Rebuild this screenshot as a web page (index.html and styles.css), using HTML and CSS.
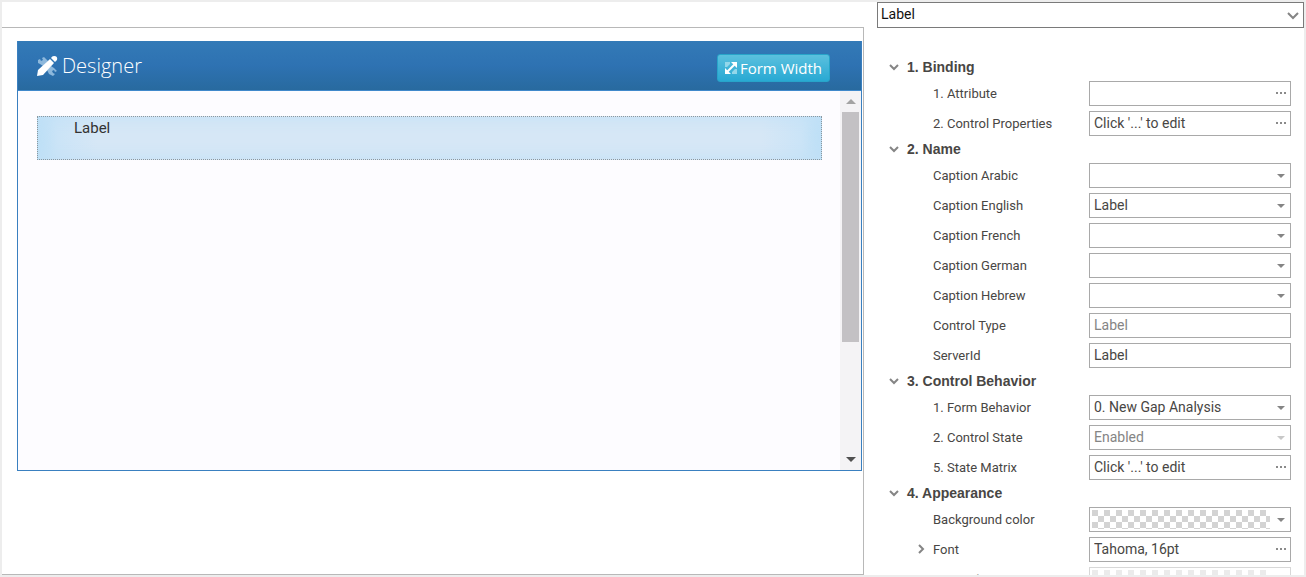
FILE: index.html
```
<!DOCTYPE html>
<html lang="en">
<head>
    <meta charset="UTF-8">
    <meta name="viewport" content="width=device-width, initial-scale=1.0">
    <title>Form Designer</title>
    <link rel="stylesheet" href="styles.css">
</head>
<body>
    <main class="workspace">
        <section class="canvas">
            <div class="designer">
                <header class="designer-header">
                    <svg class="designer-icon" viewBox="0 0 22 22" aria-hidden="true">
                        <path d="M2 5l2-1 1 2 2-1-1-2 2-1 4 4-5 5-3-2-2-1zM11 15l4-4 3 2 3 3-2 1-1-2-2 1 1 2 2 1-2 2-4-2z" fill="#8db8dc"/>
                        <path d="M1 21l1-6L14 4l4 4L7 20z" fill="#fff"/>
                        <path d="M15 3q1-2 3-2 4 0 3 4l-2 2z" fill="#fff"/>
                    </svg>
                    <h1>Designer</h1>
                    <button type="button" class="width-button">
                        <svg viewBox="0 0 14 14" aria-hidden="true">
                            <path d="M1 1h5v2L3 6H1zM13 13H8v-2l3-3h2z" fill="#93d7ea"/>
                            <path d="M3 11l8-8" stroke="#fff" stroke-width="2"/>
                            <path d="M7 1h6v6zM1 7v6h6z" fill="#fff"/>
                        </svg>
                        Form Width
                    </button>
                </header>
                <div class="designer-body">
                    <div class="form-area">
                        <div class="form-control">Label</div>
                    </div>
                    <div class="scrollbar">
                        <span class="scroll-arrow up"></span>
                        <span class="scroll-thumb"></span>
                        <span class="scroll-arrow down"></span>
                    </div>
                </div>
            </div>
        </section>

        <aside class="properties">
            <div class="picker">
                <select aria-label="Selected control"><option>Label</option></select>
                <svg viewBox="0 0 12 12" aria-hidden="true"><path d="M1 4l5 5 5-5"/></svg>
            </div>

            <form class="grid">
                <h2><button type="button"><svg viewBox="0 0 10 10"><path d="M1 3l4 4 4-4"/></svg>1. Binding</button></h2>
                <div class="row">
                    <label for="attribute">1. Attribute</label>
                    <div class="field"><input id="attribute" type="text"><button type="button" class="more" aria-label="Edit attribute"><i></i><i></i><i></i></button></div>
                </div>
                <div class="row">
                    <label for="control-properties">2. Control Properties</label>
                    <div class="field"><input id="control-properties" type="text" value="Click '...' to edit"><button type="button" class="more" aria-label="Edit control properties"><i></i><i></i><i></i></button></div>
                </div>

                <h2><button type="button"><svg viewBox="0 0 10 10"><path d="M1 3l4 4 4-4"/></svg>2. Name</button></h2>
                <div class="row">
                    <label for="caption-arabic">Caption Arabic</label>
                    <div class="field drop"><select id="caption-arabic"><option></option></select></div>
                </div>
                <div class="row">
                    <label for="caption-english">Caption English</label>
                    <div class="field drop"><select id="caption-english"><option>Label</option></select></div>
                </div>
                <div class="row">
                    <label for="caption-french">Caption French</label>
                    <div class="field drop"><select id="caption-french"><option></option></select></div>
                </div>
                <div class="row">
                    <label for="caption-german">Caption German</label>
                    <div class="field drop"><select id="caption-german"><option></option></select></div>
                </div>
                <div class="row">
                    <label for="caption-hebrew">Caption Hebrew</label>
                    <div class="field drop"><select id="caption-hebrew"><option></option></select></div>
                </div>
                <div class="row">
                    <label for="control-type">Control Type</label>
                    <div class="field"><input id="control-type" type="text" value="Label" disabled></div>
                </div>
                <div class="row">
                    <label for="server-id">ServerId</label>
                    <div class="field"><input id="server-id" type="text" value="Label"></div>
                </div>

                <h2><button type="button"><svg viewBox="0 0 10 10"><path d="M1 3l4 4 4-4"/></svg>3. Control Behavior</button></h2>
                <div class="row">
                    <label for="form-behavior">1. Form Behavior</label>
                    <div class="field drop"><select id="form-behavior"><option>0. New Gap Analysis</option></select></div>
                </div>
                <div class="row">
                    <label for="control-state">2. Control State</label>
                    <div class="field drop locked"><select id="control-state" disabled><option>Enabled</option></select></div>
                </div>
                <div class="row">
                    <label for="state-matrix">5. State Matrix</label>
                    <div class="field"><input id="state-matrix" type="text" value="Click '...' to edit"><button type="button" class="more" aria-label="Edit state matrix"><i></i><i></i><i></i></button></div>
                </div>

                <h2><button type="button"><svg viewBox="0 0 10 10"><path d="M1 3l4 4 4-4"/></svg>4. Appearance</button></h2>
                <div class="row">
                    <label for="background-color">Background color</label>
                    <div class="field drop"><select id="background-color" class="swatch"><option></option></select></div>
                </div>
                <div class="row expandable">
                    <button type="button" class="expand" aria-label="Expand font"><svg viewBox="0 0 10 10"><path d="M3 1l4 4-4 4"/></svg></button>
                    <label for="font">Font</label>
                    <div class="field"><input id="font" type="text" value="Tahoma, 16pt"><button type="button" class="more" aria-label="Edit font"><i></i><i></i><i></i></button></div>
                </div>
                <div class="row faded">
                    <label for="font-color">Font color</label>
                    <div class="field drop"><select id="font-color" class="swatch"><option></option></select></div>
                </div>
            </form>
        </aside>
    </main>
</body>
</html>
```

FILE: styles.css
```
* {
    box-sizing: border-box;
}
body {
    margin: 0;
    font-family: Roboto, "Liberation Sans", sans-serif;
    font-size: 14px;
    color: #484644;
    background: #fff;
}
button, input, select {
    font: inherit;
    color: inherit;
    background: none;
    border: none;
    border-radius: 0;
    padding: 0;
    margin: 0;
    outline: none;
}
select {
    appearance: none;
}
.workspace {
    display: grid;
    grid-template-columns: minmax(0, 1fr) 440px;
    height: 100vh;
    border: 2px solid #ededed;
    overflow: hidden;
}

/* Design surface */
.canvas {
    margin-top: 25px;
    padding: 13px 1px 0 15px;
    border: 1px solid #b8b8b8;
    border-left: none;
}
.designer {
    border: 1px solid #3a80c0;
    border-top: none;
}
.designer-header {
    display: flex;
    align-items: center;
    height: 50px;
    padding: 0 31px 0 18px;
    color: #fff;
    background: linear-gradient(#337ab7, #2e72b2 50%, #286a9f);
    border-bottom: 1px solid #4089cb;
}
.designer-icon {
    width: 22px;
    height: 22px;
    margin-right: 4px;
}
.designer-header h1 {
    flex: 1;
    margin: 0;
    font-family: "Open Sans", sans-serif;
    font-size: 20px;
    font-weight: 300;
}
.width-button {
    display: flex;
    align-items: center;
    gap: 2px;
    height: 28px;
    margin-top: 4px;
    padding: 0 7px 0 6px;
    font-family: "Open Sans", sans-serif;
    font-size: 15px;
    background: linear-gradient(#5bc0de, #28a9d3);
    border: 1px solid #28a4c9;
    border-radius: 3px;
}
.width-button svg {
    width: 14px;
    height: 14px;
}
.designer-body {
    display: flex;
    height: 379px;
    background: #fdfcff;
}
.form-area {
    flex: 1;
    padding: 25px 18px 25px 19px;
}
.form-control {
    height: 44px;
    padding: 2px 36px;
    font-size: 15px;
    color: #333;
    border: 1px dotted #8b979f;
    background: linear-gradient(90deg, #bcdff6, #cbe4f7 20px, #d6e7f6 60px, #d6e7f6 calc(100% - 60px), #cbe4f7 calc(100% - 20px), #bcdff6);
    box-shadow: inset 0 0 16px #c2e1f7;
}
.scrollbar {
    display: flex;
    flex-direction: column;
    align-items: center;
    width: 21px;
    padding: 8px 0;
    background: #f4f3f5;
}
.scroll-arrow {
    border: 5px solid transparent;
}
.scroll-arrow.up {
    border-top: none;
    border-bottom-color: #a3a3a3;
}
.scroll-arrow.down {
    margin-top: auto;
    border-bottom: none;
    border-top-color: #505050;
}
.scroll-thumb {
    width: 17px;
    height: 230px;
    margin-top: 8px;
    background: #c3c1c4;
}

/* Property panel */
.properties {
    padding-left: 13px;
    overflow: hidden;
}
.picker {
    position: relative;
    display: flex;
    color: #111;
}
.picker select {
    flex: 1;
    height: 26px;
    padding: 0 24px 2px 3px;
    border: 1px solid #7a7a7a;
}
.picker svg {
    position: absolute;
    right: 5px;
    top: 7px;
    width: 12px;
    height: 12px;
    pointer-events: none;
}
.picker path, .grid path {
    fill: none;
    stroke: #858585;
    stroke-width: 2;
}
.grid {
    padding: 28px 13px 0 12px;
}
.grid h2 {
    height: 22px;
    margin: 0;
    font-family: "Liberation Sans", sans-serif;
    font-size: 14px;
}
.grid h2 button {
    display: flex;
    align-items: center;
    gap: 8px;
    height: 22px;
    font-weight: bold;
}
.grid svg {
    display: block;
    width: 10px;
    height: 10px;
}
.row {
    display: flex;
    align-items: center;
    height: 30px;
    padding-left: 44px;
}
.row label {
    flex: 1;
    font-size: 13px;
}
.row.expandable {
    padding-left: 27px;
}
.expand {
    margin-right: 7px;
}
.field {
    position: relative;
    display: flex;
    width: 202px;
    height: 25px;
    border: 1px solid #a9a9a9;
}
.field input, .field select {
    flex: 1;
    min-width: 0;
    padding-left: 4px;
}
.field input:disabled, .field select:disabled {
    color: #858585;
    opacity: 1;
}
.more {
    display: flex;
    align-items: center;
    gap: 2px;
    padding-right: 4px;
}
.more i {
    width: 2px;
    height: 2px;
    background: #8a8a8a;
}
.drop::after {
    content: "";
    position: absolute;
    right: 5px;
    top: 10px;
    border: 4px solid transparent;
    border-top-color: #858585;
    border-bottom: none;
    pointer-events: none;
}
.drop.locked::after {
    border-top-color: #c8c8c8;
}
.field .swatch {
    margin: 2px 20px 2px 2px;
    background: repeating-conic-gradient(#fff 0 25%, #d3d3d3 0 50%) 0 0 / 12px 12px;
}
.row.faded {
    opacity: 0.45;
}
```
